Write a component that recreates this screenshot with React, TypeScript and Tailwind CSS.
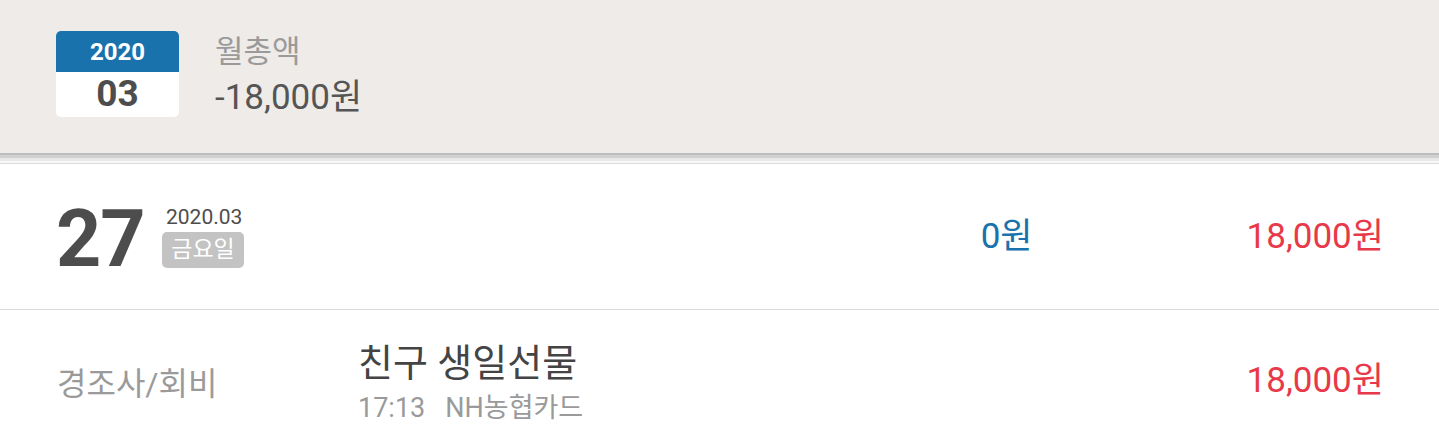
import React from 'react';

const roboto = { fontFamily: 'Roboto, "Noto Sans CJK KR", sans-serif' };

function CalendarBadge({ year, month }: { year: string; month: string }) {
  return (
    <div className="w-[123px] h-[86px] rounded-[5px] overflow-hidden flex flex-col bg-white">
      <div className="h-[41px] bg-[#1a72ad] flex items-center justify-center text-white font-bold text-[24px] leading-none">
        {year}
      </div>
      <div className="flex-1 flex items-center justify-center text-[#4d4d4d] font-bold text-[37px] leading-none pb-[2px]">
        {month}
      </div>
    </div>
  );
}

export default function App() {
  return (
    <div className="w-[1439px] h-[445px] bg-white overflow-hidden" style={roboto}>
      {/* monthly summary */}
      <div className="h-[153px] bg-[#eeebe8] flex items-start pl-[56px] pt-[31px] gap-[36px]">
        <CalendarBadge year="2020" month="03" />
        <div className="flex flex-col">
          <div className="text-[31px] leading-none text-[#9a9a9a] mt-[5px]">월총액</div>
          <div className="text-[35px] leading-none text-[#555555] mt-[13px]">-18,000원</div>
        </div>
      </div>
      <div className="h-[2px] bg-[#bcbcbc]" />
      <div className="h-[3px] bg-[#d0d0d0]" />
      <div className="h-[3px] bg-[#e8e8e8]" />
      <div className="h-[2px] bg-[#f7f7f7]" />
      <div className="h-px bg-[#dcdcdc]" />

      {/* day header */}
      <div className="h-[146px] flex items-center border-b border-[#d9d9d9] pr-[55px]">
        <div className="pl-[56px] w-[162px] text-[79px] font-bold text-[#4d4d4d] leading-none tracking-[-1px] mt-[6px]">
          27
        </div>
        <div className="flex flex-col items-start mt-[2px]">
          <div className="text-[21px] leading-none text-[#4d4d4d] pl-[4px]">2020.03</div>
          <div className="mt-[4px] w-[82px] h-[36px] rounded-[5px] bg-[#c3c3c3] text-white text-[23px] flex items-center justify-center">
            금요일
          </div>
        </div>
        <div className="flex-1" />
        <div className="text-[35px] text-[#1a72ad] leading-none mr-[214px]">0원</div>
        <div className="text-[35px] text-[#e8394a] leading-none">18,000원</div>
      </div>

      {/* transaction */}
      <div className="h-[134px] flex items-center pr-[55px]">
        <div className="pl-[57px] w-[358px] text-[32px] text-[#9a9a9a] leading-none mt-[14px]">경조사/회비</div>
        <div className="flex flex-col mt-[12px]">
          <div className="text-[38px] text-[#444444] leading-none">친구 생일선물</div>
          <div className="text-[27px] text-[#9a9a9a] leading-none mt-[13px] whitespace-pre">17:13   NH농협카드</div>
        </div>
        <div className="flex-1" />
        <div className="text-[35px] text-[#e8394a] leading-none mt-[6px]">18,000원</div>
      </div>
    </div>
  );
}
